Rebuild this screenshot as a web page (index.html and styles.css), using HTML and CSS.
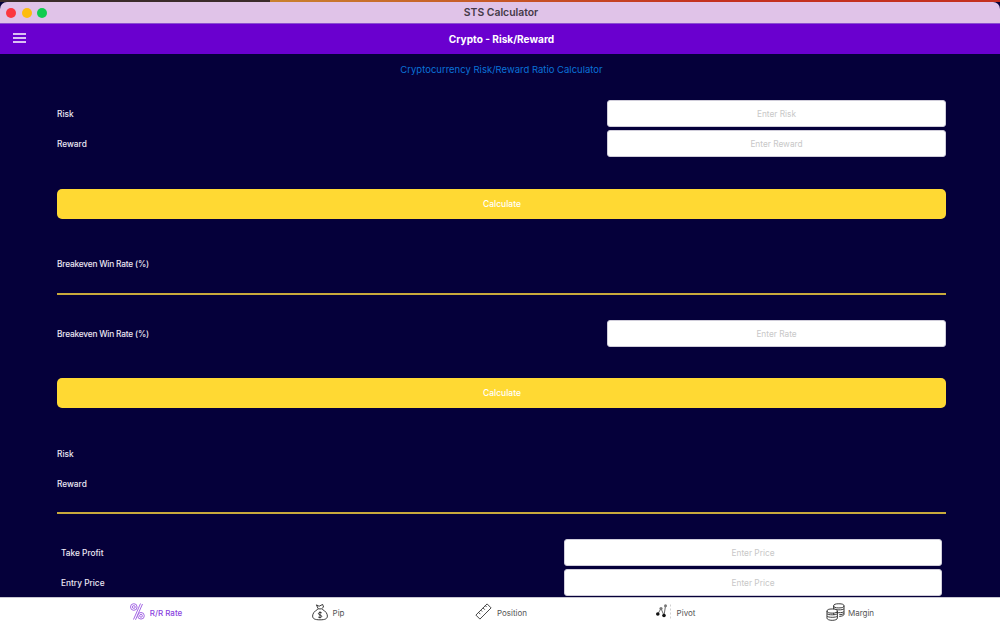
FILE: index.html
```html
<!DOCTYPE html>
<html lang="en">
<head>
<meta charset="utf-8">
<title>STS Calculator</title>
<link rel="stylesheet" href="styles.css">
</head>
<body>
<div class="desktop-strip"><span class="strip-dark"></span><span class="strip-bright"></span></div>
<div class="titlebar">
  <div class="lights"><span class="light red"></span><span class="light yellow"></span><span class="light green"></span></div>
  <div class="window-title">STS Calculator</div>
</div>
<header class="appbar">
  <svg class="menu" width="13" height="10" viewBox="0 0 13 10"><path d="M0 1h13M0 5h13M0 9h13" stroke="#fff" stroke-width="1.700" fill="none"/></svg>
  <div class="app-title">Crypto - Risk/Reward</div>
</header>
<main class="content">
  <h1 class="subtitle">Cryptocurrency Risk/Reward Ratio Calculator</h1>
  <section class="block block-first">
    <div class="row"><label class="label">Risk</label><div class="field">Enter Risk</div></div>
    <div class="row"><label class="label">Reward</label><div class="field">Enter Reward</div></div>
  </section>
  <button class="calc calc-first">Calculate</button>
  <div class="result result-first long">Breakeven Win Rate (%)</div>
  <hr class="rule rule-first">
  <section class="block block-second">
    <div class="row"><label class="label long">Breakeven Win Rate (%)</label><div class="field">Enter Rate</div></div>
  </section>
  <button class="calc calc-second">Calculate</button>
  <div class="result result-second">Risk</div>
  <div class="result">Reward</div>
  <hr class="rule rule-second">
  <section class="block block-third">
    <div class="row"><label class="label">Take Profit</label><div class="field">Enter Price</div></div>
    <div class="row"><label class="label">Entry Price</label><div class="field">Enter Price</div></div>
  </section>
</main>
<nav class="tabs">
  <a class="tab tab-active">
    <svg class="icon" width="15" height="17" viewBox="0 0 15 17" fill="none" stroke="#a468e4" stroke-width="1"><circle cx="3.800" cy="4" r="3.300"/><circle cx="3.800" cy="4" r="1.400"/><circle cx="11" cy="12.800" r="3.300"/><circle cx="11" cy="12.800" r="1.400"/><path d="M10.500 .5 L3.500 16.500 M12.500 1 L5.500 16.800"/></svg>
    <span>R/R Rate</span>
  </a>
  <a class="tab">
    <svg class="icon" width="16" height="18" viewBox="0 0 18 19" fill="none" stroke="#222" stroke-width="1"><path d="M5 1.500 L8 3 L12 1 L13 4 L10.500 6 H7 Z"/><path d="M6.500 6.500 C2.500 8.500 .7 11.500 .7 14 C.7 17 3 18.300 9 18.300 C15 18.300 17.300 17 17.300 14 C17.300 11.500 15.500 8.500 11.500 6.500"/><path d="M11 10.500 C10.300 9.700 7.200 9.600 7.200 11.400 C7.200 13.200 11 12.600 11 14.400 C11 16 7.800 16 7 15.200 M9 8.800 V16.600"/></svg>
    <span>Pip</span>
  </a>
  <a class="tab">
    <svg class="icon" width="17" height="17" viewBox="0 0 19 19" fill="none" stroke="#333" stroke-width="1"><path d="M13.500 1 L18 5.500 L5.500 18 L1 13.500 Z"/><path d="M4 10.500 L6 12.500 M6.500 8 L8 9.500 M9 5.500 L11 7.500 M11.500 3 L13 4.500"/></svg>
    <span>Position</span>
  </a>
  <a class="tab">
    <svg class="icon" width="16" height="15" viewBox="0 0 16 15" fill="none" stroke="#444" stroke-width=".8"><path d="M1.800 10 L5 4.500 L8 11.500 L9.500 1.800"/><circle cx="1.800" cy="10" r="1.800" fill="#111" stroke="none"/><circle cx="5" cy="4.500" r="1.600" fill="#777" stroke="none"/><circle cx="8" cy="11.500" r="1.800" fill="#111" stroke="none"/><circle cx="9.500" cy="1.800" r="1.500" fill="#777" stroke="none"/><path d="M14.500 .5v2M14.500 4.500v2M14.500 8.500v2M14.500 12.500v2" stroke="#c4c4c4"/></svg>
    <span>Pivot</span>
  </a>
  <a class="tab tab-margin">
    <svg class="icon" width="19" height="18" viewBox="0 0 20 19" fill="none" stroke="#333" stroke-width="1"><ellipse cx="13.500" cy="3" rx="5.500" ry="2.200"/><path d="M8 3v9.500M19 3v9c0 1-1.800 2-5 2.200M8 6c1 1.500 10 1.800 11 0M8 9c1 1.500 10 1.800 11 0M14 12.300c2.500 0 4.500-.6 5-1.500"/><ellipse cx="6.500" cy="8.500" rx="5.500" ry="2.200" fill="#fff"/><path d="M1 8.500v7.500c0 1.300 2.500 2.300 5.500 2.300s5.500-1 5.500-2.300V8.500M1 11.200c.8 1.700 10.200 1.700 11 0M1 13.800c.8 1.700 10.200 1.700 11 0"/></svg>
    <span>Margin</span>
  </a>
</nav>
</body>
</html>
```
FILE: styles.css
```css
* { box-sizing: border-box; }
html, body { margin: 0; height: 625px; overflow: hidden; }
body {
  width: 1000px;
  display: flex;
  flex-direction: column;
  font-family: Inter, Roboto, "Liberation Sans", sans-serif;
  background: #05003a;
}
.desktop-strip { height: 2px; display: flex; flex: none; }
.strip-dark { width: 270px; background: #3b2b2a; }
.strip-bright { flex: 1; background: linear-gradient(90deg, #c9812f, #c4301f 60%); }
.titlebar {
  height: 22px;
  flex: none;
  position: relative;
  display: flex;
  align-items: center;
  justify-content: center;
  padding-left: 2px;
  background: #e0c3e8;
  border-radius: 7px 7px 0 0;
  border-bottom: 1px solid #8a4fd0;
}
.lights { position: absolute; left: 6px; top: 6px; display: flex; gap: 5.500px; }
.light { width: 10px; height: 10px; border-radius: 50%; }
.red { background: #fb3640; }
.yellow { background: #fdbc10; }
.green { background: #10cc50; }
.window-title { font-size: 10.400px; font-weight: 600; color: #453a48; }
.appbar {
  height: 30px;
  flex: none;
  position: relative;
  display: flex;
  align-items: center;
  justify-content: center;
  padding-left: 3px;
  background: #6a00cf;
}
.menu { position: absolute; left: 13px; top: 9px; }
.app-title { font-size: 10.100px; font-weight: 700; color: #fff; }
.content { flex: 1; min-height: 0; overflow: hidden; display: flex; flex-direction: column; padding: 0 54px 0 57px; }
.subtitle { margin: 10px 0 0; height: 12px; line-height: 12px; text-align: center; font-size: 9.500px; font-weight: 400; color: #0a72d8; }
.block { display: flex; flex-direction: column; gap: 3px; }
.block-first { margin-top: 24px; }
.block-second { margin-top: 25px; }
.block-third { margin: 25px 4px 0; }
.row { display: flex; justify-content: space-between; align-items: center; height: 27px; }
.label { font-size: 8.300px; font-weight: 500; color: #ece8f4; }
.long { letter-spacing: -.18px; }
.field {
  width: 339px;
  height: 27px;
  display: flex;
  align-items: center;
  justify-content: center;
  background: #fff;
  border: 1px solid #d0cdda;
  border-radius: 3px;
  font-size: 8.300px;
  color: #c8c8c8;
}
.block-third .field { width: 378px; }
.calc {
  display: block;
  width: 100%;
  height: 30px;
  border: 0;
  border-radius: 5px;
  background: #ffd933;
  color: #fff;
  font: 500 8.500px Inter, Roboto, sans-serif;
  padding: 0 0 0 1px;
}
.calc-first { margin-top: 32px; }
.calc-second { margin-top: 31px; }
.result { height: 30px; display: flex; align-items: center; font-size: 8.300px; font-weight: 500; color: #ece8f4; }
.result-first { margin-top: 30px; }
.result-second { margin-top: 31px; }
.rule { width: 100%; height: 2px; border: 0; margin: 14px 0 0; background: #c8a93c; flex: none; }
.rule-second { margin-top: 13px; }
.tabs {
  height: 28px;
  flex: none;
  display: grid;
  grid-template-columns: 172px 172px 174px 175px 174px;
  padding: 0 63px 0 70px;
  align-items: center;
  background: #fff;
  border-top: 1px solid #c9c7d2;
}
.tab { display: flex; align-items: center; justify-content: center; gap: 5px; font-size: 8px; color: #555; }
.tab span { padding-top: 2px; }
.tab-active { color: #8a3fe0; font-weight: 500; }
.tab-margin { gap: 3px; }
.icon { flex: none; }
```
